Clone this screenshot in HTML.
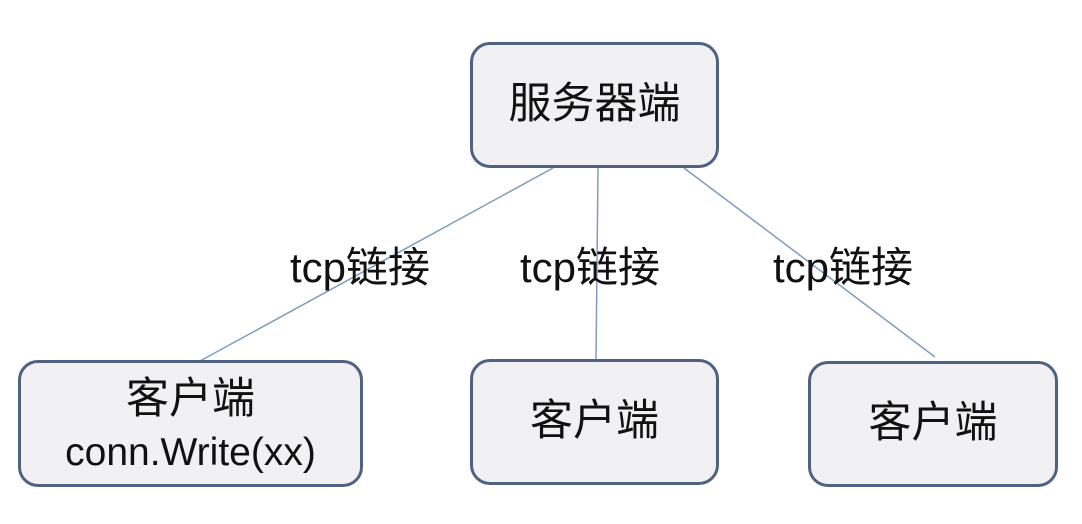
<!DOCTYPE html>
<html><head><meta charset="utf-8"><style>
body{margin:0;width:1082px;height:524px;background:#fff;position:relative;overflow:hidden;font-family:"Liberation Sans","Noto Sans CJK SC",sans-serif;color:#111}
.b{position:absolute;box-sizing:border-box;border:3px solid #4f6282;border-radius:20px;background:#f1f1f3;display:flex;flex-direction:column;align-items:center;justify-content:center;line-height:1.2}
.l{position:absolute;font-size:42px;line-height:42px;white-space:nowrap}
</style></head><body>
<svg width="1082" height="524" style="position:absolute;left:0;top:0">
<g stroke="#7f9cc0" stroke-width="1.5" fill="none">
<line x1="553" y1="168" x2="200" y2="361"/>
<line x1="598" y1="168" x2="596" y2="360"/>
<line x1="684" y1="168" x2="935" y2="357"/>
</g></svg>
<div class="b" style="left:470px;top:42px;width:249px;height:126px;font-size:43px">服务器端</div>
<div class="b" style="left:18px;top:360px;width:345px;height:127px;font-size:43px;line-height:54px;padding-top:4px">客户端<span style="font-size:39px">conn.Write(xx)</span></div>
<div class="b" style="left:470px;top:359px;width:249px;height:126px;font-size:43px">客户端</div>
<div class="b" style="left:808px;top:361px;width:250px;height:126px;font-size:43px">客户端</div>
<div class="l" style="left:290px;top:247px">tcp链接</div>
<div class="l" style="left:520px;top:247px">tcp链接</div>
<div class="l" style="left:773px;top:247px">tcp链接</div>
</body></html>
